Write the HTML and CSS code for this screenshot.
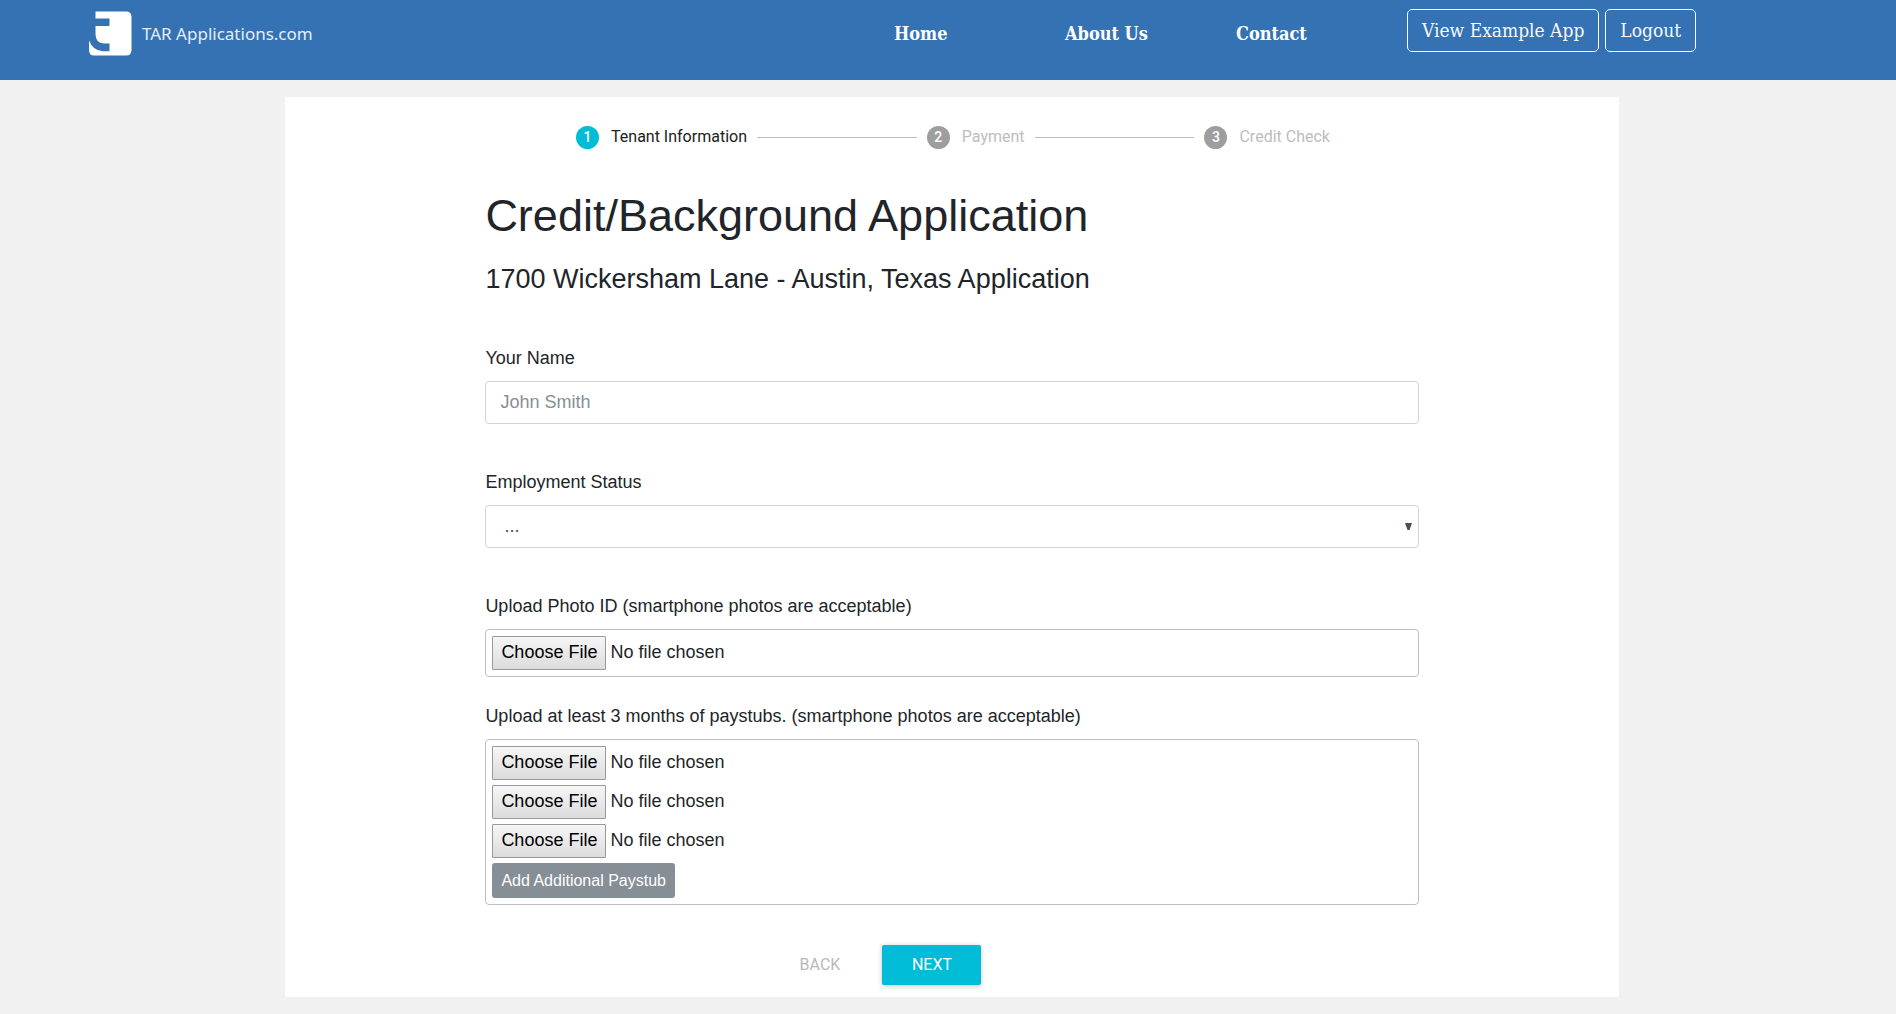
FILE: index.html
```html
<!DOCTYPE html>
<html lang="en">
<head>
<meta charset="utf-8">
<meta name="viewport" content="width=device-width, initial-scale=1">
<title>TAR Applications.com</title>
<link rel="stylesheet" href="styles.css">
</head>
<body>
<header class="site-header">
  <a class="brand" href="#">
    <svg class="brand-mark" viewBox="0 0 44 45" aria-hidden="true">
      <path fill="#fff" d="M7.500 0.500H38Q43.500 0.500 43.500 6V39Q43.500 44.500 38 44.500H6Q1 44.500 1 39V29.500Q5 40 15 40.200H21.500V32.500H16Q7.500 32 7.500 23V15H21.500V7.500H7.500Z"/>
    </svg>
    <span class="brand-name">TAR Applications.com</span>
  </a>
  <nav class="site-nav">
    <a href="#">Home</a>
    <a href="#">About Us</a>
    <a href="#">Contact</a>
  </nav>
  <div class="account">
    <button class="outline-button" type="button">View Example App</button>
    <button class="outline-button" type="button">Logout</button>
  </div>
</header>

<main class="card">
  <ol class="stepper">
    <li class="step step-active"><span class="step-number">1</span><span>Tenant Information</span></li>
    <li class="step-line" role="presentation"></li>
    <li class="step"><span class="step-number">2</span><span>Payment</span></li>
    <li class="step-line" role="presentation"></li>
    <li class="step"><span class="step-number">3</span><span>Credit Check</span></li>
  </ol>

  <form class="application">
    <h1>Credit/Background Application</h1>
    <h2>1700 Wickersham Lane - Austin, Texas Application</h2>

    <div class="fields">
      <div class="field">
        <label for="name">Your Name</label>
        <input class="control" id="name" type="text" placeholder="John Smith">
      </div>

      <div class="field">
        <label for="employment">Employment Status</label>
        <div class="select-wrap">
          <select class="control" id="employment"><option>...</option></select>
          <svg class="caret" viewBox="0 0 7 7" aria-hidden="true"><path fill="#495057" d="M0 0H7L4.500 7H2.500Z"/></svg>
        </div>
      </div>

      <div class="uploads">
        <div class="field">
          <label for="photo">Upload Photo ID (smartphone photos are acceptable)</label>
          <div class="upload-box">
            <input class="file" id="photo" type="file">
          </div>
        </div>

        <div class="field">
          <label for="paystub-1">Upload at least 3 months of paystubs. (smartphone photos are acceptable)</label>
          <div class="upload-box">
            <input class="file" id="paystub-1" type="file">
            <input class="file" type="file" aria-label="Second paystub">
            <input class="file" type="file" aria-label="Third paystub">
            <button class="add-button" type="button">Add Additional Paystub</button>
          </div>
        </div>
      </div>
    </div>

    <div class="actions">
      <button class="flat-button" type="button" disabled>BACK</button>
      <button class="raised-button" type="button">NEXT</button>
    </div>
  </form>
</main>
</body>
</html>
```
FILE: styles.css
```css
* {
  box-sizing: border-box;
}

body {
  margin: 0;
  background: #f1f1f1;
  color: #212529;
  font: 18px/27px "Liberation Sans", Arial, sans-serif;
}

button,
input,
select {
  font: inherit;
}

/* Header */
.site-header {
  display: grid;
  grid-template-columns: 806fr 513fr 489fr;
  align-items: start;
  min-height: 80px;
  padding: 9px 0 0 88px;
  background: #3572b4;
}

.brand {
  display: flex;
  align-items: center;
  gap: 10px;
  padding-top: 2px;
  color: #e4edf7;
  text-decoration: none;
}

.brand-mark {
  width: 44px;
  height: 45px;
}

.brand-name {
  font: 17px/24px "Noto Sans", sans-serif;
}

.site-nav {
  display: grid;
  grid-template-columns: repeat(3, 1fr);
  padding-top: 11px;
}

.site-nav a {
  color: #fff;
  font: bold 18px/28px "DejaVu Serif Condensed", "DejaVu Serif", serif;
  text-decoration: none;
  white-space: nowrap;
}

.account {
  display: flex;
  gap: 6px;
}

.outline-button {
  height: 43px;
  padding: 0 14px;
  border: 1px solid #fff;
  border-radius: 5px;
  background: transparent;
  color: #f8f9fa;
  font: 19px/27px "DejaVu Serif Condensed", "DejaVu Serif", serif;
  white-space: nowrap;
}

/* Card */
.card {
  width: calc(70% + 6px);
  margin: 17px 0 18px calc(15% + 1px);
  padding: 28px 0 12px;
  background: #fff;
}

.stepper {
  display: flex;
  align-items: center;
  gap: 10px;
  width: 57%;
  margin: 0 auto;
  padding: 0 2px 0 4px;
  color: #bdbdbd;
  font: 16px/24px Roboto, sans-serif;
  list-style: none;
}

.step {
  display: flex;
  align-items: center;
  gap: 12px;
  white-space: nowrap;
}

.step-active {
  color: #212121;
}

.step-number {
  width: 23px;
  height: 23px;
  border-radius: 50%;
  background: #9e9e9e;
  color: #fff;
  font-size: 14px;
  font-weight: 500;
  line-height: 23px;
  text-align: center;
}

.step-active .step-number {
  background: #00bcd7;
}

.step-line {
  flex: 1;
  height: 1px;
  background: #bdbdbd;
}

/* Form */
.application {
  width: 70%;
  margin: 40px auto 0;
}

h1,
h2 {
  margin: 0;
  font-weight: 400;
}

h1 {
  font-size: 45px;
  line-height: 54px;
}

h2 {
  margin-top: 19px;
  font-size: 27px;
  line-height: 34px;
}

.fields {
  display: flex;
  flex-direction: column;
  gap: 45px;
  margin-top: 49px;
}

.uploads {
  display: flex;
  flex-direction: column;
  gap: 26px;
}

.field label {
  display: block;
  margin-bottom: 9px;
}

.control {
  display: block;
  width: 100%;
  height: 43px;
  padding: 0 14px;
  border: 1px solid #ced4da;
  border-radius: 4px;
  background: #fff;
  color: #495057;
}

.control::placeholder {
  color: #868e96;
  opacity: 1;
}

.select-wrap {
  position: relative;
}

.select-wrap .control {
  padding: 0 18px;
  appearance: none;
}

.caret {
  position: absolute;
  top: 18px;
  right: 7px;
  width: 7px;
  height: 7px;
  pointer-events: none;
}

.upload-box {
  display: flex;
  flex-direction: column;
  align-items: flex-start;
  gap: 5px;
  padding: 6px;
  border: 1px solid #bfbfbf;
  border-radius: 4px;
}

.file {
  display: block;
  height: 34px;
}

.file::file-selector-button {
  height: 34px;
  margin: 0 4px 0 0;
  padding: 0 8px 2px;
  border: 1px solid #999;
  border-radius: 1px;
  background: linear-gradient(#f6f6f6, #dcdcdc);
  color: #000;
  font: inherit;
}

.add-button {
  height: 35px;
  padding: 0 9px;
  border: 0;
  border-radius: 3px;
  background: #868e96;
  color: #fff;
  font-size: 16px;
}

/* Step actions */
.actions {
  display: flex;
  justify-content: center;
  gap: 13px;
  margin-top: 40px;
  padding-right: 152px;
}

.flat-button,
.raised-button {
  width: 99px;
  height: 40px;
  border: 0;
  border-radius: 2px;
  font: 16px/24px Roboto, sans-serif;
}

.flat-button {
  background: transparent;
  color: #b8b8b8;
}

.raised-button {
  background: #00bcd7;
  box-shadow: 0 1px 6px rgba(0, 0, 0, 0.12), 0 1px 4px rgba(0, 0, 0, 0.12);
  color: #fff;
}
```
